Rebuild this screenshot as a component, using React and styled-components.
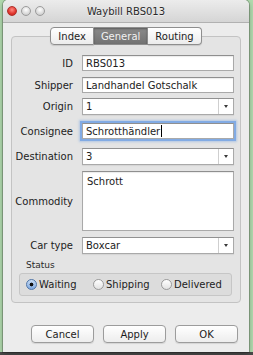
import React from 'react';
import styled, { createGlobalStyle } from 'styled-components';

const GlobalStyle = createGlobalStyle`
  html, body { margin: 0; padding: 0; }
  body {
    width: 253px;
    height: 355px;
    overflow: hidden;
    background: linear-gradient(to bottom, #b2dbaf 0, #b2dbaf 352px, #4a4a4a 352px);
    font-family: "DejaVu Sans", "Liberation Sans", sans-serif;
    font-size: 10px;
    color: #1c1c1c;
  }
`;

const Window = styled.div`
  margin-left: 3px;
  width: 246px;
  height: 352px;
  background: #ececec;
  border-radius: 5px 5px 0 0;
  box-shadow: 0 0 0 1px rgba(0, 0, 0, 0.22), 0 2px 6px rgba(0, 0, 0, 0.3);
  display: flex;
  flex-direction: column;
`;

const TitleBar = styled.div`
  height: 22px;
  display: grid;
  grid-template-columns: 1fr auto 1fr;
  align-items: center;
  background: linear-gradient(#ececec, #d5d5d5);
  border-bottom: 1px solid #b1b1b1;
  border-radius: 5px 5px 0 0;
`;

const Lights = styled.div`
  display: flex;
  gap: 4px;
  padding-left: 4px;
`;

const Light = styled.span`
  width: 10px;
  height: 10px;
  border-radius: 50%;
  box-sizing: border-box;
  border: 1px solid ${p => (p.$red ? '#b0302a' : '#9c9c9c')};
  background: ${p =>
    p.$red
      ? 'radial-gradient(circle at 50% 35%, #ff8a82, #e0352d 60%, #b8231d)'
      : 'radial-gradient(circle at 50% 35%, #ffffff, #d6d6d6 65%, #bdbdbd)'};
`;

const Title = styled.div`
  font-size: 10px;
  color: #2a2a2a;
  text-shadow: 0 1px 0 rgba(255, 255, 255, 0.6);
`;

const Tabs = styled.div`
  display: flex;
  justify-content: center;
  margin-top: 4px;
  position: relative;
  z-index: 1;
`;

const Tab = styled.div`
  height: 18px;
  box-sizing: border-box;
  padding: 0 7px;
  display: flex;
  align-items: center;
  border: 1px solid #8e8e8e;
  border-left-width: ${p => (p.$first ? '1px' : '0')};
  border-radius: ${p => (p.$first ? '4px 0 0 4px' : p.$last ? '0 4px 4px 0' : '0')};
  background: ${p =>
    p.$active ? 'linear-gradient(#8a8a8a, #727272)' : 'linear-gradient(#ffffff, #ececec)'};
  color: ${p => (p.$active ? '#f2f2f2' : '#1c1c1c')};
  box-shadow: ${p => (p.$active ? 'inset 0 1px 2px rgba(0,0,0,0.35)' : '0 1px 1px rgba(0,0,0,0.12)')};
`;

const Panel = styled.div`
  margin: -9px 8px 0;
  height: 267px;
  box-sizing: border-box;
  border: 1px solid #c3c3c3;
  border-radius: 4px;
  background: #e4e4e4;
  padding: 18px 0 0 0;
  display: flex;
  flex-direction: column;
`;

const Row = styled.div`
  display: grid;
  grid-template-columns: 61px 152px;
  column-gap: 9px;
  align-items: center;
  margin-top: ${p => p.$gap || 0}px;
`;

const Label = styled.label`
  text-align: right;
  white-space: nowrap;
`;

const Field = styled.div`
  height: ${p => p.$h || 16}px;
  box-sizing: border-box;
  background: #fff;
  border: 1px solid #a9a9a9;
  border-top-color: #8f8f8f;
  box-shadow: ${p =>
    p.$focus ? '0 0 0 2px #82abe4, 0 0 2px 3px rgba(130,171,228,0.5)' : 'inset 0 1px 1px rgba(0,0,0,0.08)'};
  padding: ${p => (p.$area ? '4px 0 0 4px' : '0 0 0 3px')};
  display: flex;
  align-items: ${p => (p.$area ? 'flex-start' : 'center')};
  white-space: nowrap;
`;

const Caret = styled.span`
  display: inline-block;
  width: 1px;
  height: 12px;
  background: #000;
  margin-left: 1px;
`;

const Combo = styled.div`
  height: 17px;
  box-sizing: border-box;
  background: #fff;
  border: 1px solid #a9a9a9;
  border-top-color: #919191;
  display: flex;
  align-items: stretch;
  box-shadow: 0 1px 1px rgba(0, 0, 0, 0.06);
`;

const ComboText = styled.div`
  flex: 1;
  padding-left: 3px;
  display: flex;
  align-items: center;
`;

const ComboArrow = styled.div`
  width: 14px;
  border-left: 1px solid #cfcfcf;
  display: flex;
  align-items: center;
  justify-content: center;
  &::after {
    content: '';
    border-left: 2.5px solid transparent;
    border-right: 2.5px solid transparent;
    border-top: 3px solid #3a3a3a;
  }
`;

const GroupLabel = styled.div`
  font-size: 9px;
  margin: 6px 0 0 14px;
  color: #2a2a2a;
`;

const RadioBox = styled.div`
  margin: 3px 8px 0 7px;
  height: 23px;
  box-sizing: border-box;
  border: 1px solid #c6c6c6;
  border-radius: 3px;
  background: #dcdcdc;
  display: grid;
  grid-template-columns: 67px 68px auto;
  align-items: center;
  padding-left: 6px;
`;

const Radio = styled.div`
  display: flex;
  align-items: center;
  gap: 2px;
  font-size: 10px;
  &::before {
    content: '';
    width: 11px;
    height: 11px;
    box-sizing: border-box;
    border-radius: 50%;
    border: 1px solid ${p => (p.$checked ? '#4f75a8' : '#9a9a9a')};
    background: ${p =>
      p.$checked
        ? 'radial-gradient(circle, #111 0, #111 1.6px, transparent 2.2px), linear-gradient(#c8dcf4, #7ea8e0)'
        : 'linear-gradient(#ffffff, #e2e2e2)'};
  }
`;

const Buttons = styled.div`
  display: flex;
  justify-content: flex-end;
  gap: 9px;
  padding-right: 11px;
  margin-top: 22px;
`;

const Button = styled.button`
  width: 63px;
  height: 18px;
  padding: 0;
  font-family: inherit;
  font-size: 10px;
  color: #1c1c1c;
  border: 1px solid #9c9c9c;
  border-radius: 4px;
  background: linear-gradient(#ffffff, #ededed);
  box-shadow: 0 1px 1px rgba(0, 0, 0, 0.1);
`;

const TextRow = ({ label, gap, children, focus }) => (
  <Row $gap={gap}>
    <Label>{label}</Label>
    <Field $focus={focus}>{children}</Field>
  </Row>
);

const ComboRow = ({ label, gap, value }) => (
  <Row $gap={gap}>
    <Label>{label}</Label>
    <Combo>
      <ComboText>{value}</ComboText>
      <ComboArrow />
    </Combo>
  </Row>
);

const App = () => (
  <>
    <GlobalStyle />
    <Window>
      <TitleBar>
        <Lights>
          <Light $red />
          <Light />
          <Light />
        </Lights>
        <Title>Waybill RBS013</Title>
        <span />
      </TitleBar>
      <Tabs>
        <Tab $first>Index</Tab>
        <Tab $active>General</Tab>
        <Tab $last>Routing</Tab>
      </Tabs>
      <Panel>
        <TextRow label="ID">RBS013</TextRow>
        <TextRow label="Shipper" gap={6}>Landhandel Gotschalk</TextRow>
        <ComboRow label="Origin" gap={5} value="1" />
        <TextRow label="Consignee" gap={8} focus>
          Schrotthändler<Caret />
        </TextRow>
        <ComboRow label="Destination" gap={9} value="3" />
        <Row $gap={6}>
          <Label>Commodity</Label>
          <Field $h={60} $area>Schrott</Field>
        </Row>
        <ComboRow label="Car type" gap={6} value="Boxcar" />
        <GroupLabel>Status</GroupLabel>
        <RadioBox>
          <Radio $checked>Waiting</Radio>
          <Radio>Shipping</Radio>
          <Radio>Delivered</Radio>
        </RadioBox>
      </Panel>
      <Buttons>
        <Button>Cancel</Button>
        <Button>Apply</Button>
        <Button>OK</Button>
      </Buttons>
    </Window>
  </>
);

export default App;
